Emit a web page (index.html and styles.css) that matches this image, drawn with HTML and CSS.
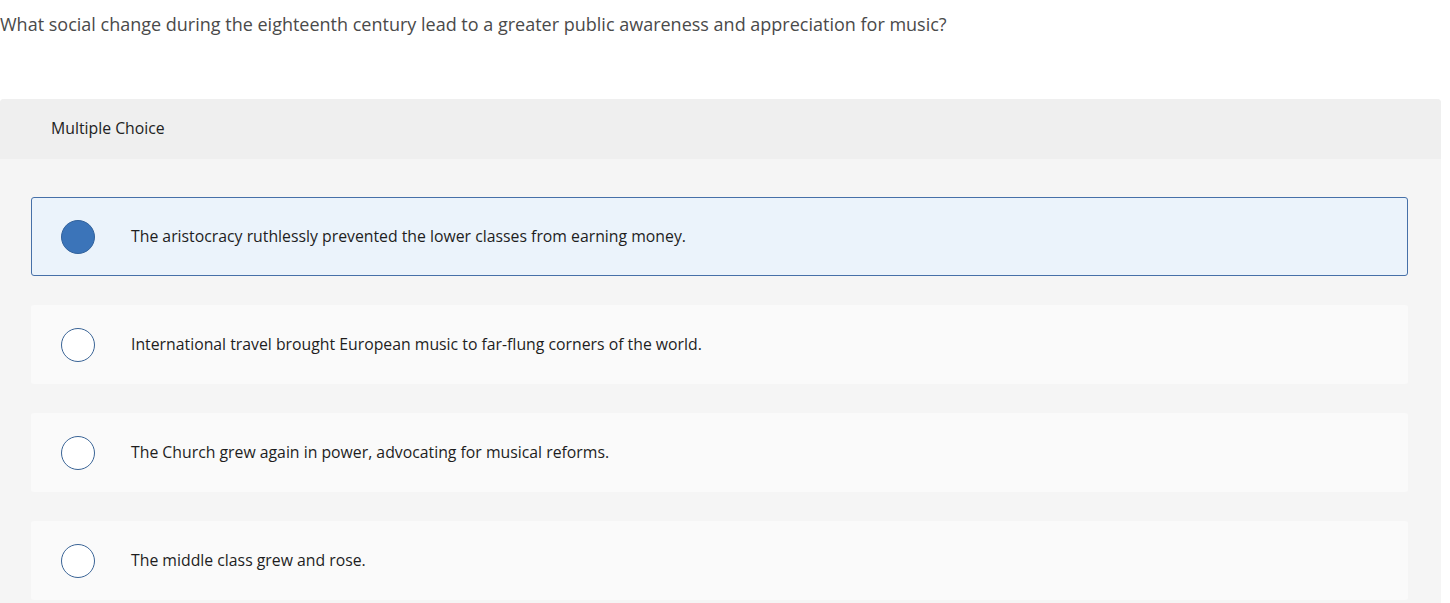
FILE: index.html
```html
<!DOCTYPE html>
<html>
<head>
<meta charset="utf-8">
<link rel="stylesheet" href="styles.css">
</head>
<body>
<div class="question">What social change during the eighteenth century lead to a greater public awareness and appreciation for music?</div>
<div class="panel">
  <div class="panel-head">Multiple Choice</div>
  <div class="panel-body">
    <div class="option selected"><span class="radio"></span><span class="label">The aristocracy ruthlessly prevented the lower classes from earning money.</span></div>
    <div class="option"><span class="radio"></span><span class="label">International travel brought European music to far-flung corners of the world.</span></div>
    <div class="option"><span class="radio"></span><span class="label">The Church grew again in power, advocating for musical reforms.</span></div>
    <div class="option"><span class="radio"></span><span class="label">The middle class grew and rose.</span></div>
  </div>
</div>
</body>
</html>
```
FILE: styles.css
```css
html, body {
  margin: 0;
  padding: 0;
  background: #ffffff;
  font-family: "Open Sans", "Lato", sans-serif;
}
.question {
  height: 99px;
  box-sizing: border-box;
  padding-top: 12px;
  font-size: 18px;
  line-height: 24px;
  color: #4a4a4a;
}
.panel {
  width: 1441px;
  border-radius: 4px 4px 0 0;
  overflow: hidden;
  background: #f5f5f5;
}
.panel-head {
  height: 60px;
  box-sizing: border-box;
  background: #efefef;
  padding: 19px 0 0 51px;
  font-size: 15.8px;
  line-height: 21px;
  color: #222;
}
.panel-body {
  padding: 38px 33px 10px 31px;
  display: flex;
  flex-direction: column;
  gap: 29px;
}
.option {
  height: 79px;
  box-sizing: border-box;
  background: #fafafa;
  border: 1px solid transparent;
  border-radius: 3px;
  display: flex;
  align-items: center;
  padding-left: 29px;
}
.option.selected {
  background: #ebf3fb;
  border-color: #4670a8;
}
.radio {
  width: 34px;
  height: 34px;
  box-sizing: border-box;
  border-radius: 50%;
  border: 1.5px solid #3a6496;
  background: #ffffff;
  flex: none;
}
.option.selected .radio {
  background: #3b74b9;
  border-color: #32629c;
}
.label {
  margin-left: 36px;
  font-size: 15.8px;
  line-height: 20px;
  color: #1e1e1e;
  position: relative;
  top: -1px;
}
```
